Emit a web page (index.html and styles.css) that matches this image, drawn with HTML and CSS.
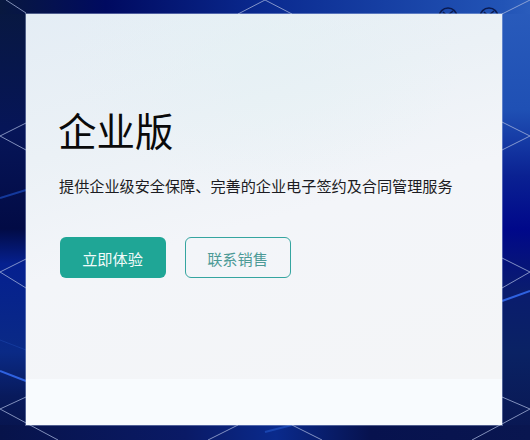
FILE: index.html
```html
<!DOCTYPE html>
<html lang="zh-CN">
<head>
<meta charset="utf-8">
<title>企业版</title>
<link rel="stylesheet" href="styles.css">
</head>
<body>
<svg class="backdrop" width="530" height="440" viewBox="0 0 530 440" aria-hidden="true">
  <defs>
    <linearGradient id="gl" x1="0" y1="0" x2="0" y2="1">
      <stop offset="0" stop-color="#08183f"/><stop offset=".3" stop-color="#061558"/>
      <stop offset=".52" stop-color="#020b45"/><stop offset=".6" stop-color="#05208f"/>
      <stop offset=".8" stop-color="#0a2a86"/><stop offset=".9" stop-color="#081a5c"/><stop offset="1" stop-color="#07134a"/>
    </linearGradient>
    <linearGradient id="gr" x1="0" y1="0" x2="0" y2="1">
      <stop offset="0" stop-color="#2a5cbc"/><stop offset=".25" stop-color="#1f50b4"/>
      <stop offset=".4" stop-color="#0a2192"/><stop offset=".52" stop-color="#00088a"/>
      <stop offset=".66" stop-color="#0a1c6e"/><stop offset=".8" stop-color="#0a2264"/><stop offset="1" stop-color="#091650"/>
    </linearGradient>
    <linearGradient id="gt" x1="0" y1="0" x2="1" y2="0">
      <stop offset="0" stop-color="#08183f"/><stop offset=".2" stop-color="#000a60"/>
      <stop offset=".5" stop-color="#0a2a90"/><stop offset=".95" stop-color="#2254b6"/><stop offset="1" stop-color="#2a5cbc"/>
    </linearGradient>
    <linearGradient id="gb" x1="0" y1="0" x2="1" y2="0">
      <stop offset="0" stop-color="#07134a"/><stop offset=".35" stop-color="#0a1a66"/>
      <stop offset=".52" stop-color="#0a2a8c"/><stop offset=".7" stop-color="#07124e"/><stop offset="1" stop-color="#091650"/>
    </linearGradient>
  </defs>
  <rect x="0" y="0" width="26" height="440" fill="url(#gl)"/>
  <rect x="502" y="0" width="28" height="440" fill="url(#gr)"/>
  <rect x="0" y="0" width="530" height="14" fill="url(#gt)"/>
  <rect x="0" y="425" width="530" height="15" fill="url(#gb)"/>
  <g fill="none" stroke-width="2">
    <path d="M0 371 26 381" stroke="#2f62e0"/><path d="M502 301 530 291" stroke="#2f62e0"/>
    <path d="M0 198 26 190" stroke="#14399c"/><path d="M0 340 26 350" stroke="#14399c" stroke-width="1"/>
    <path d="M265 432 292 425" stroke="#1a45b0"/>
  </g>
  <g fill="none" stroke="#aab8de" stroke-width="1" opacity=".75">
    <path d="M6 0 26 13"/><path d="M26 123 0 136 26 150"/><path d="M26 259 0 272 26 288"/>
    <path d="M26 397 0 409 58 440"/>
    <path d="M238 14 265 0 292 14"/><path d="M502 14 530 0"/>
    <path d="M502 122 530 136 502 150"/><path d="M502 258 530 272 502 288"/><path d="M502 397 530 409 472 440"/>
    <path d="M238 425 208 440"/><path d="M292 425 322 440"/>
  </g>
  <g fill="none" stroke="#0a1a50" stroke-width="1.6">
    <circle cx="448" cy="17" r="9"/><path d="M443 12 447 16 443 20M453 11 448 15"/>
    <circle cx="489" cy="17" r="9"/><path d="M484 12 488 16 484 20M494 11 489 15"/>
  </g>
</svg>
<main class="card">
  <section class="hero">
    <h1 class="title">企业版</h1>
    <p class="lead">提供企业级安全保障、完善的企业电子签约及合同管理服务</p>
    <div class="actions">
      <a class="btn btn-primary">立即体验</a>
      <a class="btn btn-outline">联系销售</a>
    </div>
  </section>
  <div class="strip"></div>
</main>
</body>
</html>
```
FILE: styles.css
```css
* { box-sizing: border-box; }
html, body { margin: 0; height: 440px; overflow: hidden; }
body {
  padding: 14px 28px 15px 26px;
  background: #07134a;
  font-family: "Noto Sans CJK SC", "Liberation Sans", sans-serif;
  display: flex;
}
.backdrop { position: absolute; left: 0; top: 0; display: block; }
.card {
  position: relative;
  flex: 1;
  display: flex;
  flex-direction: column;
  box-shadow: 0 0 0 1px rgba(190, 205, 235, .4);
}
.hero {
  flex: 1;
  padding: 88px 0 0 33px;
  background:
    radial-gradient(200px 130px at 50% 12%, rgba(228, 241, 244, .6), rgba(228, 241, 244, 0)),
    linear-gradient(165deg, #e4edf5 0%, #ebf1f6 30%, #f3f5f9 55%, #f4f5f7 100%);
}
.title {
  margin: 0 0 0 -1px;
  font-size: 38.5px;
  font-weight: 400;
  line-height: 54px;
  color: #0a0a0a;
}
.lead {
  margin: 18px 0 0;
  font-size: 15.15px;
  line-height: 22px;
  color: #1c1c22;
  white-space: nowrap;
}
.actions {
  display: flex;
  gap: 19px;
  margin: 41px 0 0 1px;
}
.btn {
  display: flex;
  align-items: center;
  justify-content: center;
  width: 106px;
  height: 41px;
  padding-right: 1px;
  border-radius: 6px;
  font-size: 15.2px;
}
.btn-primary { background: #1fa696; color: #f2fbfa; }
.btn-outline { border: 1px solid #35a5a0; color: #4c9a96; }
.strip { height: 46px; background: #f8fbfe; }
```
